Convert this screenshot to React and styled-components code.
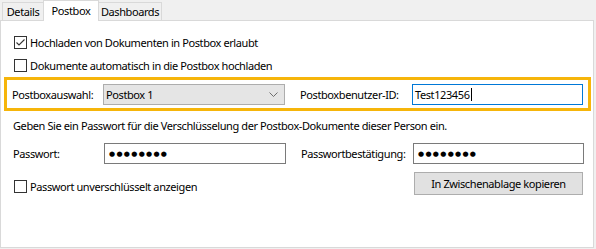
import React from 'react';
import styled, { createGlobalStyle } from 'styled-components';

const GlobalStyle = createGlobalStyle`
  html, body {
    margin: 0;
    padding: 0;
    background: #f0f0f0;
  }
  body {
    font-family: 'Noto Sans', 'Open Sans', sans-serif;
    font-size: 11px;
    letter-spacing: -0.4px;
    color: #000;
  }
`;

const Window = styled.div`
  width: 596px;
  height: 249px;
  overflow: hidden;
  background: #f0f0f0;
`;

const TabStrip = styled.div`
  display: flex;
  align-items: flex-end;
  height: 20px;
  padding-left: 2px;
`;

const Tab = styled.div`
  box-sizing: border-box;
  width: ${p => p.$width}px;
  height: ${p => (p.$active ? '21px' : '18px')};
  margin: ${p => (p.$active ? '0 0 -1px -1px' : '0')};
  padding-bottom: ${p => (p.$active ? '2px' : '0')};
  border: 1px solid #d9d9d9;
  border-bottom: none;
  border-left-width: ${p => (p.$joined ? '0' : '1px')};
  background: ${p => (p.$active ? '#fff' : '#f0f0f0')};
  position: relative;
  z-index: ${p => (p.$active ? 2 : 1)};
  display: flex;
  align-items: center;
  justify-content: center;
  white-space: nowrap;
`;

const Panel = styled.div`
  box-sizing: border-box;
  width: 594px;
  height: 228px;
  border: 1px solid #d9d9d9;
  background: #fff;
  padding: 13px 2px 0 3px;
  display: flex;
  flex-direction: column;
`;

const CheckRow = styled.label`
  display: flex;
  align-items: center;
  gap: 3px;
  height: 17px;
  padding-left: 10px;
  margin-bottom: ${p => p.$gap || 0}px;
  white-space: nowrap;
`;

const Box = styled.span`
  box-sizing: border-box;
  width: 13px;
  height: 13px;
  border: 1px solid #333;
  background: #fff;
  display: flex;
  align-items: center;
  justify-content: center;
`;

const Highlight = styled.div`
  margin-top: 3px;
  border: 3px solid #f6b50a;
  padding: 4px 4px 3px 5px;
`;

const FormGrid = styled.div`
  display: grid;
  grid-template-columns: 91px 182px 127px 171px;
  align-items: center;
  padding-left: ${p => p.$indent || 0}px;
  margin-top: ${p => p.$top || 0}px;
`;

const Label = styled.span`
  padding-left: ${p => (p.$second ? '15px' : '0')};
  white-space: nowrap;
`;

const Select = styled.div`
  box-sizing: border-box;
  height: 21px;
  border: 1px solid #adadad;
  background: #e5e5e5;
  display: flex;
  align-items: center;
  justify-content: space-between;
  padding: 0 6px 0 2px;
`;

const Field = styled.div`
  box-sizing: border-box;
  height: 21px;
  border: 1px solid ${p => (p.$focused ? '#0078d7' : '#7a7a7a')};
  background: #fff;
  display: flex;
  align-items: center;
  padding-left: 2px;
`;

const Caret = styled.span`
  display: inline-block;
  width: 1px;
  height: 13px;
  background: #000;
  margin-left: 1px;
`;

const Dots = styled.span`
  font-family: 'DejaVu Sans', sans-serif;
  font-size: 7px;
  letter-spacing: 1.3px;
  padding-left: 2px;
`;

const Hint = styled.div`
  margin-top: 7px;
  padding-left: 9px;
  height: 16px;
  line-height: 16px;
  white-space: nowrap;
`;

const ActionGrid = styled(FormGrid)`
  align-items: start;
`;

const CheckCell = styled.div`
  grid-column: 1 / 4;
  margin-left: -9px;
  padding-top: 6px;
`;

const Button = styled.button`
  grid-column: 4;
  box-sizing: border-box;
  height: 23px;
  margin: 0 1px;
  border: 1px solid #adadad;
  background: #e1e1e1;
  font: inherit;
  letter-spacing: inherit;
  color: #000;
  padding: 0;
`;

const Check = () => (
  <svg width="11" height="11" viewBox="0 0 11 11">
    <polyline points="1.5,5.5 4,8 9.5,2.5" fill="none" stroke="#333" strokeWidth="1.1" />
  </svg>
);

const Chevron = () => (
  <svg width="9" height="5" viewBox="0 0 9 5">
    <polyline points="0.5,0.5 4.5,4.5 8.5,0.5" fill="none" stroke="#606060" strokeWidth="0.9" />
  </svg>
);

const CheckOption = ({ checked, children, ...rest }) => (
  <CheckRow {...rest}>
    <Box>{checked && <Check />}</Box>
    {children}
  </CheckRow>
);

export default function App() {
  return (
    <Window>
      <GlobalStyle />
      <TabStrip>
        <Tab $width={42}>Details</Tab>
        <Tab $active $width={56}>Postbox</Tab>
        <Tab $joined $width={63}>Dashboards</Tab>
      </TabStrip>
      <Panel>
        <CheckOption checked $gap={6}>Hochladen von Dokumenten in Postbox erlaubt</CheckOption>
        <CheckOption>Dokumente automatisch in die Postbox hochladen</CheckOption>

        <Highlight>
          <FormGrid>
            <Label>Postboxauswahl:</Label>
            <Select>
              <span>Postbox 1</span>
              <Chevron />
            </Select>
            <Label $second>Postboxbenutzer-ID:</Label>
            <Field $focused>
              Test123456<Caret />
            </Field>
          </FormGrid>
        </Highlight>

        <Hint>Geben Sie ein Passwort für die Verschlüsselung der Postbox-Dokumente dieser Person ein.</Hint>

        <FormGrid $indent={9} $top={9}>
          <Label>Passwort:</Label>
          <Field>
            <Dots>●●●●●●●●</Dots>
          </Field>
          <Label $second>Passwortbestätigung:</Label>
          <Field>
            <Dots>●●●●●●●●</Dots>
          </Field>
        </FormGrid>

        <ActionGrid $indent={9} $top={8}>
          <CheckCell>
            <CheckOption>Passwort unverschlüsselt anzeigen</CheckOption>
          </CheckCell>
          <Button>In Zwischenablage kopieren</Button>
        </ActionGrid>
      </Panel>
    </Window>
  );
}
